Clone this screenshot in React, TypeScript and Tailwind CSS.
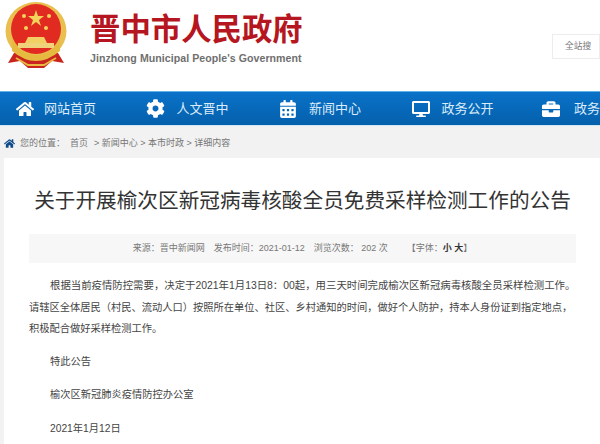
import { FC } from "react";
import {
  FaBriefcase,
  FaCalendarAlt,
  FaCog,
  FaDesktop,
  FaHome,
} from "react-icons/fa";

const cjk = "font-['Liberation_Sans','Noto_Sans_CJK_SC',sans-serif]";

const navItems = [
  { icon: <FaHome size={18} />, label: "网站首页", slot: "pr-[10px]" },
  { icon: <FaCog size={19} />, label: "人文晋中", slot: "pr-[12px]" },
  { icon: <FaCalendarAlt size={18} />, label: "新闻中心", slot: "pr-[12px]" },
  { icon: <FaDesktop size={18} />, label: "政务公开", slot: "pr-[12px]" },
  { icon: <FaBriefcase size={18} />, label: "政务", slot: "pr-[14px]" },
];

const Emblem: FC = () => (
  <svg width="72" height="70" viewBox="0 0 72 70" className="shrink-0">
    <path d="M14 52 L8 62 L20 60 L28 67 L44 67 L52 60 L64 62 L58 52 Z" fill="#c9241d" />
    <path d="M16 57 L28 64 L44 64 L56 57" fill="none" stroke="#e8b93e" strokeWidth="2" />
    <ellipse cx="36" cy="30" rx="30.5" ry="29" fill="#e9c04f" />
    <ellipse cx="36" cy="28" rx="25" ry="25" fill="#e22b20" />
    <polygon points="36,9 38,15 44,15 39,19 41,25 36,21 31,25 33,19 28,15 34,15" fill="#f2d35b" />
    <circle cx="24" cy="15" r="2" fill="#f2d35b" />
    <circle cx="49" cy="15" r="2" fill="#f2d35b" />
    <circle cx="26" cy="27" r="2" fill="#f2d35b" />
    <circle cx="46" cy="27" r="2" fill="#f2d35b" />
    <path d="M25 42 L28 36 L44 36 L47 42 Z" fill="#f2cf62" />
    <rect x="18" y="42" width="36" height="5" fill="#efd27a" />
    <path d="M12 38 Q20 54 36 54 Q52 54 60 38 L60 50 Q48 60 36 60 Q24 60 12 50 Z" fill="#e6b93f" />
  </svg>
);

const App: FC = () => {
  return (
    <div className={`${cjk} h-[444px] w-[600px] overflow-hidden bg-[#f2f2f2]`}>
      <header className="flex h-[91px] items-start overflow-hidden bg-white">
        <div className="mt-[1px]">
          <Emblem />
        </div>
        <div className="ml-[18px] mt-[10px] w-[230px]">
          <div className="whitespace-nowrap text-[30.4px] font-bold leading-[38px] text-[#b51620]">
            晋中市人民政府
          </div>
          <div className="mt-[4px] whitespace-nowrap text-[10.6px] font-bold leading-[13px] tracking-[0.05px] text-[#6f6f6f]">
            Jinzhong Municipal People's Government
          </div>
        </div>
        <div className="ml-auto mt-[34px] flex h-[25px] w-[48px] items-center border border-[#ececec] pl-[12px] text-[8.7px] text-[#777777]">
          全站搜
        </div>
      </header>

      <nav className="flex h-[35px] items-center border-y border-t-[#62b3e8] border-b-[#cfe6f5] bg-gradient-to-b from-[#0a72c8] to-[#0560ac] text-white">
        {navItems.map((item) => (
          <div key={item.label} className="flex w-[132.5px] shrink-0 items-center">
            <div className={`flex w-[44px] shrink-0 justify-end ${item.slot}`}>{item.icon}</div>
            <span className="whitespace-nowrap text-[13px] text-[#dcecf8]">{item.label}</span>
          </div>
        ))}
      </nav>

      <div className="flex h-[32px] items-center gap-[5px] pl-[4px] pt-[3px] text-[9px] text-[#777777]">
        <FaHome size={11} className="text-[#0f4c8a]" />
        <span>您的位置：</span>
        <span>首页</span>
        <span className="ml-[1px]">&gt; 新闻中心 &gt; 本市时政 &gt; 详细内容</span>
      </div>

      <main className="ml-[4px] h-[300px] bg-white pl-[25px] pr-[24px] pt-[29px]">
        <h1 className="whitespace-nowrap text-center text-[20.65px] font-normal leading-[28px] text-[#333333]">
          关于开展榆次区新冠病毒核酸全员免费采样检测工作的公告
        </h1>
        <div className="mt-[19px] flex h-[29px] items-center justify-center gap-[9px] whitespace-nowrap bg-[#f7f7f7] text-[9px] text-[#777777]">
          <span>来源：晋中新闻网</span>
          <span>发布时间：2021-01-12</span>
          <span>浏览次数： 202 次</span>
          <span className="ml-[10px]">
            【字体：<b className="text-[#333333]">小 大</b>】
          </span>
        </div>
        <div className="mt-[12px] text-[10.25px] leading-[21.5px] text-[#444444]">
          <p className="whitespace-nowrap indent-[21px] text-[10.4px]">
            根据当前疫情防控需要，决定于2021年1月13日8：00起，用三天时间完成榆次区新冠病毒核酸全员采样检测工作。
          </p>
          <p className="whitespace-nowrap">
            请辖区全体居民（村民、流动人口）按照所在单位、社区、乡村通知的时间，做好个人防护，持本人身份证到指定地点，
          </p>
          <p>积极配合做好采样检测工作。</p>
          <p className="mt-[11px] pl-[21px]">特此公告</p>
          <p className="mt-[12px] pl-[21px]">榆次区新冠肺炎疫情防控办公室</p>
          <p className="mt-[12px] pl-[21px]">2021年1月12日</p>
        </div>
      </main>
    </div>
  );
};

export default App;
